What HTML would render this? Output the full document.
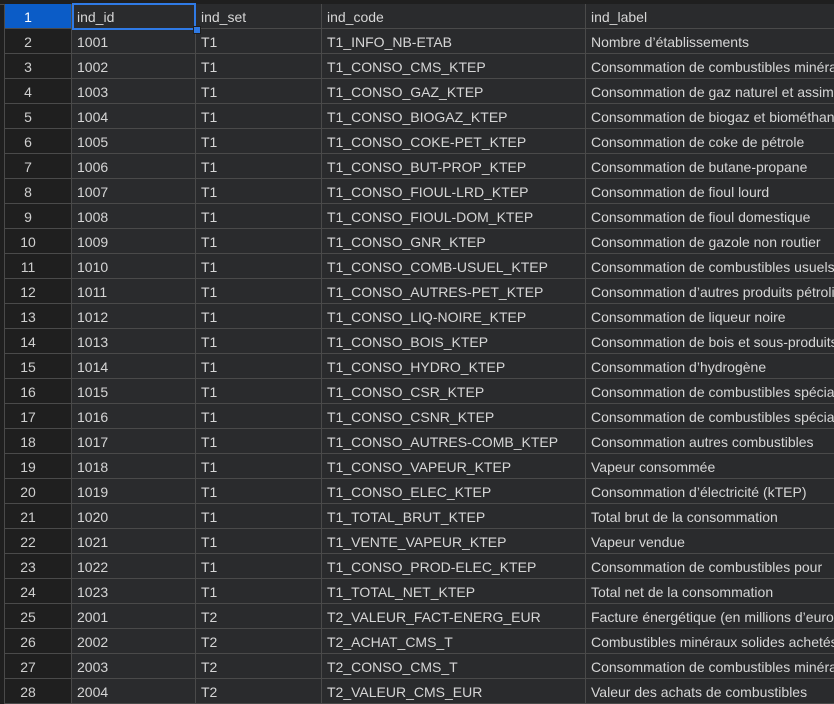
<!DOCTYPE html>
<html><head><meta charset="utf-8"><style>
body{margin:0;background:#1f1f1f;width:834px;height:696px;overflow:hidden;font-family:"Segoe UI","Liberation Sans","DejaVu Sans",sans-serif;font-size:14px;color:#d6d6d6}
.wrap{position:absolute;top:4px;left:0}
.r{position:absolute;left:0;height:25px;width:1000px}
.c{position:absolute;top:0;height:25px;line-height:26px;border-bottom:1px solid #4a4a4a;border-right:1px solid #4a4a4a;background:#2a2b2d;padding-left:5px;box-sizing:border-box;white-space:nowrap;overflow:hidden}
.h{left:4px;width:68px;background:#1f1f1f;text-align:center;padding:0 20px 0 0;border-left:1px solid #4a4a4a;color:#cfcfcf}
.a{left:72px;width:124px}.b{left:196px;width:126px}.cc{left:322px;width:264px}.d{left:586px;width:400px;border-right:none}
.sel{background:#0b5cc7;color:#fff}
</style></head><body>
<div style="position:absolute;top:0;left:0;width:834px;height:4px;background:#1f1f1f;border-bottom:1px solid #4a4a4a"></div>
<div class="wrap" id="w"></div>
<script>
var rows=[["ind_id","ind_set","ind_code","ind_label"],
["1001","T1","T1_INFO_NB-ETAB","Nombre d’établissements"],
["1002","T1","T1_CONSO_CMS_KTEP","Consommation de combustibles minéraux"],
["1003","T1","T1_CONSO_GAZ_KTEP","Consommation de gaz naturel et assimilés"],
["1004","T1","T1_CONSO_BIOGAZ_KTEP","Consommation de biogaz et biométhane"],
["1005","T1","T1_CONSO_COKE-PET_KTEP","Consommation de coke de pétrole"],
["1006","T1","T1_CONSO_BUT-PROP_KTEP","Consommation de butane-propane"],
["1007","T1","T1_CONSO_FIOUL-LRD_KTEP","Consommation de fioul lourd"],
["1008","T1","T1_CONSO_FIOUL-DOM_KTEP","Consommation de fioul domestique"],
["1009","T1","T1_CONSO_GNR_KTEP","Consommation de gazole non routier"],
["1010","T1","T1_CONSO_COMB-USUEL_KTEP","Consommation de combustibles usuels"],
["1011","T1","T1_CONSO_AUTRES-PET_KTEP","Consommation d’autres produits pétroliers"],
["1012","T1","T1_CONSO_LIQ-NOIRE_KTEP","Consommation de liqueur noire"],
["1013","T1","T1_CONSO_BOIS_KTEP","Consommation de bois et sous-produits"],
["1014","T1","T1_CONSO_HYDRO_KTEP","Consommation d’hydrogène"],
["1015","T1","T1_CONSO_CSR_KTEP","Consommation de combustibles spéciaux"],
["1016","T1","T1_CONSO_CSNR_KTEP","Consommation de combustibles spéciaux"],
["1017","T1","T1_CONSO_AUTRES-COMB_KTEP","Consommation autres combustibles"],
["1018","T1","T1_CONSO_VAPEUR_KTEP","Vapeur consommée"],
["1019","T1","T1_CONSO_ELEC_KTEP","Consommation d’électricité (kTEP)"],
["1020","T1","T1_TOTAL_BRUT_KTEP","Total brut de la consommation"],
["1021","T1","T1_VENTE_VAPEUR_KTEP","Vapeur vendue"],
["1022","T1","T1_CONSO_PROD-ELEC_KTEP","Consommation de combustibles pour"],
["1023","T1","T1_TOTAL_NET_KTEP","Total net de la consommation"],
["2001","T2","T2_VALEUR_FACT-ENERG_EUR","Facture énergétique (en millions d’euros)"],
["2002","T2","T2_ACHAT_CMS_T","Combustibles minéraux solides achetés"],
["2003","T2","T2_CONSO_CMS_T","Consommation de combustibles minéraux"],
["2004","T2","T2_VALEUR_CMS_EUR","Valeur des achats de combustibles"]];
var h="";
rows.forEach(function(r,i){
h+='<div class="r" style="top:'+(i*25)+'px"><div class="c h'+(i==0?' sel':'')+'">'+(i+1)+'</div><div class="c a">'+r[0]+'</div><div class="c b">'+r[1]+'</div><div class="c cc">'+r[2]+'</div><div class="c d">'+r[3]+'</div></div>';
});
document.getElementById('w').innerHTML=h;
</script>
<div style="position:absolute;left:72px;top:3px;width:124px;height:27px;border:2px solid #2f7ae5;box-sizing:border-box"></div>
<div style="position:absolute;left:193px;top:26px;width:6px;height:6px;background:#2f7ae5;border:1px solid #1f1f1f"></div>
</body></html>
